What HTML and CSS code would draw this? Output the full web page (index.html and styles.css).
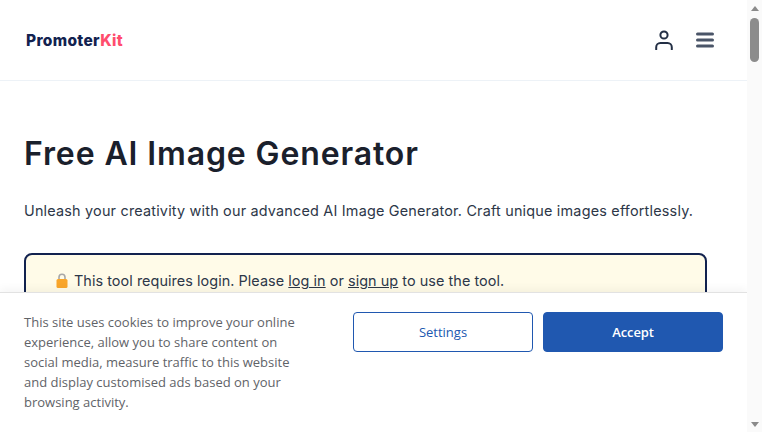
FILE: index.html
```html
<!DOCTYPE html>
<html lang="en">
<head>
<meta charset="utf-8">
<title>Free AI Image Generator</title>
<link rel="stylesheet" href="styles.css">
</head>
<body>
<div class="viewport">
  <div class="page">
    <header class="topbar">
      <a class="logo"><span class="logo-a">Promoter</span><span class="logo-b">Kit</span></a>
      <div class="actions">
        <svg class="icon-user" viewBox="0 0 18 20" width="18" height="20"><circle cx="9" cy="5" r="3.6" fill="none" stroke="#232f45" stroke-width="2"/><path d="M1.2 19.5v-2.3a4.2 4.2 0 0 1 4.2-4.2h7.2a4.2 4.2 0 0 1 4.2 4.2v2.3" fill="none" stroke="#232f45" stroke-width="2" stroke-linecap="round"/></svg>
        <svg class="icon-menu" viewBox="0 0 18 16" width="18" height="16"><path d="M1.5 2h15M1.5 8h15M1.5 14h15" fill="none" stroke="#4a5568" stroke-width="3" stroke-linecap="round"/></svg>
      </div>
    </header>
    <main class="content">
      <h1 class="title">Free AI Image Generator</h1>
      <p class="lead">Unleash your creativity with our advanced AI Image Generator. Craft unique images effortlessly.</p>
      <div class="notice">
        <p class="notice-text"><svg class="lock" viewBox="0 0 12 15" width="12" height="15"><path d="M3 7V4.2a3 3 0 0 1 6 0V7" fill="none" stroke="#a8a8a8" stroke-width="1.6"/><rect x="0.5" y="6" width="11" height="9" rx="1.5" fill="#f9a62b"/></svg>This tool requires login. Please <a class="link">log in</a> or <a class="link">sign up</a> to use the tool.</p>
      </div>
    </main>
    <section class="cookie">
      <p class="cookie-text">This site uses cookies to improve your online experience, allow you to share content on social media, measure traffic to this website and display customised ads based on your browsing activity.</p>
      <div class="cookie-buttons">
        <button class="btn btn-outline">Settings</button>
        <button class="btn btn-solid">Accept</button>
      </div>
    </section>
  </div>
  <aside class="scrollbar">
    <span class="arrow arrow-up"></span>
    <span class="thumb"></span>
    <span class="track"></span>
    <span class="arrow arrow-down"></span>
  </aside>
</div>
</body>
</html>
```
FILE: styles.css
```css
* { box-sizing: border-box; }
html, body { margin: 0; height: 100%; overflow: hidden; background: #fff; }
.viewport { display: flex; width: 762px; height: 432px; overflow: hidden; }
.page { position: relative; flex: 1; min-width: 0; overflow: hidden; font-family: "Inter", "Liberation Sans", sans-serif; color: #1a202c; }

.topbar { display: flex; align-items: center; justify-content: space-between; height: 81px; padding: 0 33px 0 26px; border-bottom: 1px solid #edf2f7; }
.logo { font-family: "Inter", sans-serif; font-weight: 800; font-size: 15.5px; letter-spacing: 0.32px; }
.logo-a { color: #12224f; }
.logo-b { color: #ff4d6d; }
.actions { display: flex; align-items: center; gap: 23px; }
.icon-user, .icon-menu { display: block; }

.content { padding: 53px 40px 0 24px; }
.title { margin: 0; font-size: 32px; line-height: 40px; font-weight: 600; color: #1a202c; letter-spacing: 0.88px; }
.lead { margin: 26px 0 0; font-size: 14.4px; line-height: 22px; color: #2d3748; letter-spacing: 0.2px; }
.notice { margin-top: 31px; height: 90px; padding: 15px 30px; background: #fffbe8; border: 2px solid #12224f; border-radius: 8px; }
.notice-text { margin: 0; font-size: 14.4px; line-height: 22px; color: #2d3748; letter-spacing: 0.06px; }
.lock { display: inline-block; vertical-align: -2px; margin-right: 6px; }
.link { color: #2d3748; text-decoration: underline; }

.cookie { position: absolute; left: 0; right: 0; bottom: 0; height: 140px; display: flex; justify-content: space-between; padding: 19px 24px 0; background: #fff; border-top: 1px solid #e2e2e2; box-shadow: 0 -4px 8px rgba(0,0,0,.04); }
.cookie-text { margin: 0; width: 285px; font-family: "Open Sans", sans-serif; font-size: 13px; line-height: 20px; color: #5f6368; }
.cookie-buttons { display: flex; gap: 10px; }
.btn { width: 180px; height: 40px; border-radius: 4px; font-family: "Open Sans", sans-serif; font-size: 13px; cursor: pointer; }
.btn-outline { background: #fff; border: 1px solid #2058b0; color: #2058b0; }
.btn-solid { background: #2058b0; border: 1px solid #2058b0; color: #fff; font-weight: 600; letter-spacing: -0.1px; }

.scrollbar { flex: 0 0 15px; display: flex; flex-direction: column; align-items: center; background: #fafafa; }
.arrow { width: 0; height: 0; border-left: 4px solid transparent; border-right: 4px solid transparent; }
.arrow-up { margin-top: 6px; border-bottom: 5px solid #8a8a8a; }
.arrow-down { margin-bottom: 5px; border-top: 5px solid #8a8a8a; }
.thumb { width: 9px; height: 44px; margin-top: 7px; border-radius: 5px; background: #8c8c8c; }
.track { flex: 1; }
```
